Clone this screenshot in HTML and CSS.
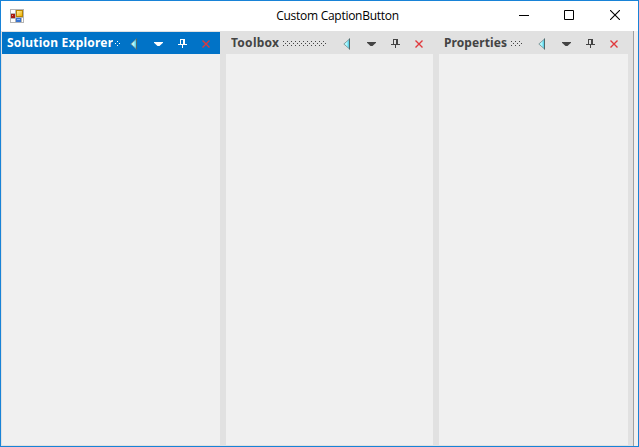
FILE: index.html
```html
<!DOCTYPE html>
<html lang="en"><head><meta charset="utf-8"><title>Custom CaptionButton</title><link rel="stylesheet" href="styles.css"></head>
<body>
<svg class="defs" width="0" height="0"><defs>
<linearGradient id="glass"><stop offset="0" stop-color="#a8e8ea"/><stop offset=".5" stop-color="#b0faff"/><stop offset="1" stop-color="#38c0e0"/></linearGradient>
<linearGradient id="gold" x2="1" y2="1"><stop offset="0" stop-color="#fff0a0"/><stop offset="1" stop-color="#eeb000"/></linearGradient>
<symbol id="back" viewBox="0 0 9 12"><path d="M7.5 1V11L1.8 6Z" fill="url(#glass)" stroke="#7f9698" stroke-width=".9"/><path d="M7.5 .5V11.5" stroke="#4d6a6c"/></symbol>
<symbol id="drop" viewBox="0 0 9 4"><path d="M0 0H9V.8L5.5 4H3.5L0 .8Z" fill="currentColor"/></symbol>
<symbol id="pin" viewBox="0 0 9 9"><path d="M2 0H7V5H9V6H5V9H4V6H0V5H2ZM3 1V5H5V1Z" fill="currentColor" fill-rule="evenodd"/></symbol>
<symbol id="close" viewBox="0 0 8 8"><path d="M.5 .5L7.5 7.5M7.5 .5L.5 7.5" stroke="#e0383c" stroke-width="1.4"/></symbol>
</defs></svg>
<div class="window">
<header class="titlebar">
<svg class="app" width="14" height="14" shape-rendering="crispEdges"><path d="M0 0H14V14H0Z" fill="#b5b5b5"/><path d="M1 1H5V4H1ZM1 10H5V13H1ZM12 9H13V13H12Z" fill="#fff"/><path d="M6 1H13V8H6Z" fill="#b98500"/><path d="M7 2H12V7H7Z" fill="url(#gold)"/><path d="M1 5H5V9H1Z" fill="#a81a12"/><path d="M2 6H3V7H2Z" fill="#f2887a"/><path d="M6 9H11V13H6Z" fill="#3974d0"/><path d="M7 10H10V11H7Z" fill="#8dbbff"/></svg>
<h1>Custom CaptionButton</h1>
<div class="controls"><svg width="10" height="10"><path d="M0 5.5H10" stroke="#000"/></svg><svg width="10" height="10"><path d="M.5 .5H9.5V9.5H.5Z" fill="none" stroke="#000"/></svg><svg width="10" height="10"><path d="M0 0L10 10M10 0L0 10" stroke="#000" stroke-width="1.1"/></svg></div>
</header>
<main class="dock">
<section class="panel first active"><div class="caption"><h2><svg width="106" height="19"><text x="0" y="14" textLength="106">Solution Explorer</text></svg></h2><i class="grip"></i><div class="buttons"><svg class="back"><use href="#back"/></svg><svg class="drop"><use href="#drop"/></svg><svg class="pin"><use href="#pin"/></svg><svg class="close"><use href="#close"/></svg></div></div></section>
<section class="panel second"><div class="caption"><h2><svg width="48" height="19"><text x="0" y="14" textLength="48">Toolbox</text></svg></h2><i class="grip"></i><div class="buttons"><svg class="back"><use href="#back"/></svg><svg class="drop"><use href="#drop"/></svg><svg class="pin"><use href="#pin"/></svg><svg class="close"><use href="#close"/></svg></div></div></section>
<section class="panel third"><div class="caption"><h2><svg width="63" height="19"><text x="0" y="14" textLength="63">Properties</text></svg></h2><i class="grip"></i><div class="buttons"><svg class="back"><use href="#back"/></svg><svg class="drop"><use href="#drop"/></svg><svg class="pin"><use href="#pin"/></svg><svg class="close"><use href="#close"/></svg></div></div></section>
</main></div>
</body></html>
```
FILE: styles.css
```css
*{box-sizing:border-box}
body{margin:0;font-family:"Noto Sans","Open Sans",sans-serif}
svg{display:block;flex:none}
.defs{position:absolute}
.window{width:639px;height:447px;border:1px solid #1883d7;background:#f0f0f0;display:flex;flex-direction:column;overflow:hidden}
.titlebar{height:30px;background:#fff;display:grid;grid-template-columns:266px 141px 1fr;align-items:center;flex:none}
.app{margin:-1px 0 0 9px}
.titlebar h1{font:400 12px/20px "Open Sans",sans-serif;letter-spacing:-.27px;margin:0;text-align:center;color:#000;white-space:nowrap}
.controls{display:flex;gap:35px;justify-content:flex-end;padding-right:19px;margin-top:-2px}
.controls svg:last-child{margin-left:1px;margin-right:-1px}
.dock{display:flex;flex:1;background:#e1e1e1;gap:6px;padding:0 0 1px 1px;margin-right:4px;border-right:1px solid #a0a0a0}
.panel{background:#f0f0f0;flex:none}
.first{width:218px}.second{width:207px}.third{width:189px}
.caption{height:23px;background:#e1e1e1;color:#444;display:flex;align-items:center;padding:2px 10px 0 5px}
.active .caption{background:#0173c7;color:#fff;border-top:1px solid #e1e1e1;padding-top:1px}
.caption h2{margin:-2px 0 0}
.caption text{font:700 12px "Noto Sans",sans-serif;fill:currentColor}
.grip{height:5px;width:5px;margin-left:4px;background-image:conic-gradient(from 0deg at 1px 1px,transparent 75%,currentColor 0),conic-gradient(from 0deg at 1px 1px,transparent 75%,currentColor 0);background-size:4px 4px;background-position:0 0,2px 2px}
.first .grip{margin-left:2px;background-position:0 2px,2px 0}
.second .grip{width:44px}.third .grip{width:12px}
.buttons{display:flex;align-items:center;margin-left:auto}
.back{width:9px;height:12px;margin-right:16px}
.drop{width:9px;height:4px;margin:1px 15px 0 0}
.pin{width:9px;height:9px;margin-right:15px}
.close{width:8px;height:8px;margin-top:1px}
```
